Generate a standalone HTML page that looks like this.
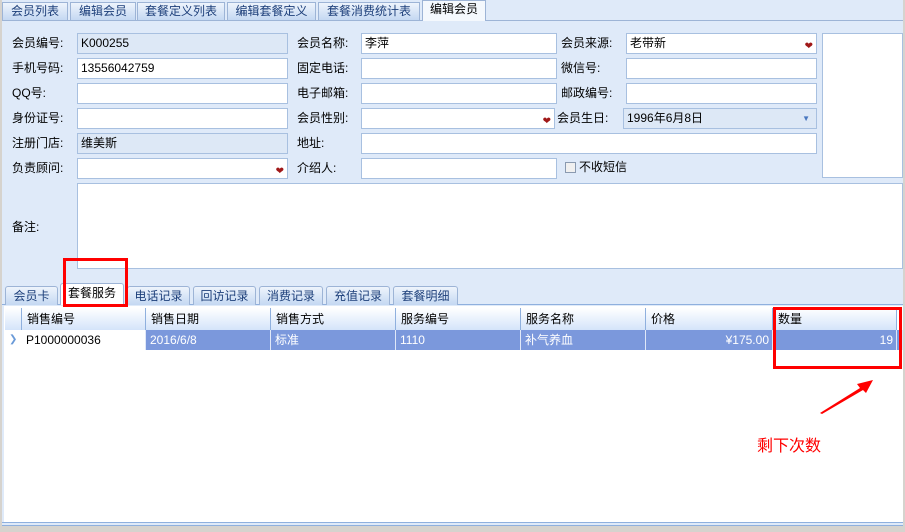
<!DOCTYPE html>
<html><head><meta charset="utf-8"><style>
*{margin:0;padding:0;box-sizing:border-box}
body{width:905px;height:532px;background:#d6d3ce;position:relative;overflow:hidden;font-family:"Liberation Sans","Noto Sans CJK SC","WenQuanYi Zen Hei",sans-serif;font-size:12px;color:#000}
.a{position:absolute}
.tab{position:absolute;top:2px;height:18px;background:linear-gradient(#eef4fc,#c4d8f2);border:1px solid #9db4d6;border-bottom:none;color:#1d3f7a;font-size:12px;line-height:16px;text-align:center}
.inp{position:absolute;height:21px;background:#fff;border:1px solid #a8c0e0;padding-left:3px;line-height:19px}
.ro{background:#dde8f6}
.lb{position:absolute;line-height:21px}
.heart{position:absolute;right:3px;top:3px;color:#a01818;font-size:10px}
.btab{position:absolute;top:286px;height:19px;background:linear-gradient(#eef4fc,#c4d8f2);border:1px solid #9db4d6;border-bottom:none;border-radius:3px 3px 0 0;color:#1d3f7a;line-height:18px;text-align:center}
.th{position:absolute;top:308px;height:22px;background:linear-gradient(#fff,#d4e4fa);border-right:1px solid #8fb0de;line-height:22px;padding-left:5px}
.td{position:absolute;top:330px;height:20px;background:#7b98dc;color:#fff;border-right:1px solid #e0e8f8;line-height:20px;padding-left:4px}
</style></head><body>
<div class="a" style="left:2px;top:0;width:901px;height:525px;background:#dfeaf9"></div>
<div class="a" style="left:2px;top:20px;width:901px;height:1px;background:#9db4d6"></div>
<div class="tab" style="left:2px;width:66px">会员列表</div>
<div class="tab" style="left:70px;width:66px">编辑会员</div>
<div class="tab" style="left:137px;width:88px">套餐定义列表</div>
<div class="tab" style="left:227px;width:89px">编辑套餐定义</div>
<div class="tab" style="left:318px;width:102px">套餐消费统计表</div>
<div class="tab" style="left:422px;width:64px;top:0;height:21px;background:#f4f8fd;color:#000">编辑会员</div>

<div class="lb" style="left:12px;top:33px">会员编号:</div><div class="inp ro" style="left:77px;top:33px;width:211px">K000255</div>
<div class="lb" style="left:297px;top:33px">会员名称:</div><div class="inp" style="left:361px;top:33px;width:196px">李萍</div>
<div class="lb" style="left:561px;top:33px">会员来源:</div><div class="inp" style="left:626px;top:33px;width:191px">老带新<span class="heart">❤</span></div>
<div class="inp" style="left:822px;top:33px;width:81px;height:145px"></div>

<div class="lb" style="left:12px;top:58px">手机号码:</div><div class="inp" style="left:77px;top:58px;width:211px">13556042759</div>
<div class="lb" style="left:297px;top:58px">固定电话:</div><div class="inp" style="left:361px;top:58px;width:196px"></div>
<div class="lb" style="left:561px;top:58px">微信号:</div><div class="inp" style="left:626px;top:58px;width:191px"></div>

<div class="lb" style="left:12px;top:83px">QQ号:</div><div class="inp" style="left:77px;top:83px;width:211px"></div>
<div class="lb" style="left:297px;top:83px">电子邮箱:</div><div class="inp" style="left:361px;top:83px;width:196px"></div>
<div class="lb" style="left:561px;top:83px">邮政编号:</div><div class="inp" style="left:626px;top:83px;width:191px"></div>

<div class="lb" style="left:12px;top:108px">身份证号:</div><div class="inp" style="left:77px;top:108px;width:211px"></div>
<div class="lb" style="left:297px;top:108px">会员性别:</div><div class="inp" style="left:361px;top:108px;width:194px"><span class="heart">❤</span></div>
<div class="lb" style="left:557px;top:108px">会员生日:</div><div class="inp ro" style="left:623px;top:108px;width:194px">1996年6月8日<span class="a" style="right:6px;top:0;color:#4a78c0;font-size:8px">▼</span></div>

<div class="lb" style="left:12px;top:133px">注册门店:</div><div class="inp ro" style="left:77px;top:133px;width:211px">维美斯</div>
<div class="lb" style="left:297px;top:133px">地址:</div><div class="inp" style="left:361px;top:133px;width:456px"></div>

<div class="lb" style="left:12px;top:158px">负责顾问:</div><div class="inp" style="left:77px;top:158px;width:211px"><span class="heart">❤</span></div>
<div class="lb" style="left:297px;top:158px">介绍人:</div><div class="inp" style="left:361px;top:158px;width:196px"></div>
<div class="a" style="left:565px;top:162px;width:11px;height:11px;border:1px solid #8a9ab0;background:#f0f0f0"></div>
<div class="lb" style="left:579px;top:157px">不收短信</div>

<div class="lb" style="left:12px;top:217px">备注:</div><div class="inp" style="left:77px;top:183px;width:826px;height:86px"></div>

<div class="a" style="left:2px;top:304px;width:901px;height:1px;background:#8fb0de"></div>
<div class="btab" style="left:5px;width:53px">会员卡</div>
<div class="btab" style="left:60px;width:64px;top:283px;height:22px;background:#fff;color:#000">套餐服务</div>
<div class="btab" style="left:127px;width:63px">电话记录</div>
<div class="btab" style="left:193px;width:63px">回访记录</div>
<div class="btab" style="left:259px;width:64px">消费记录</div>
<div class="btab" style="left:326px;width:64px">充值记录</div>
<div class="btab" style="left:393px;width:65px">套餐明细</div>

<div class="a" style="left:4px;top:306px;width:899px;height:217px;background:#fff"></div>
<div class="th" style="left:5px;width:17px"></div>
<div class="th" style="left:22px;width:124px">销售编号</div>
<div class="th" style="left:146px;width:125px">销售日期</div>
<div class="th" style="left:271px;width:125px">销售方式</div>
<div class="th" style="left:396px;width:125px">服务编号</div>
<div class="th" style="left:521px;width:125px">服务名称</div>
<div class="th" style="left:646px;width:127px">价格</div>
<div class="th" style="left:773px;width:124px">数量</div>
<div class="a" style="left:5px;top:330px;width:17px;height:20px;background:#fff;color:#6a9ad8;font-size:10px;line-height:20px;padding-left:4px">❯</div>
<div class="td" style="left:22px;width:124px;background:#fff;color:#000">P1000000036</div>
<div class="td" style="left:146px;width:125px">2016/6/8</div>
<div class="td" style="left:271px;width:125px">标准</div>
<div class="td" style="left:396px;width:125px">1110</div>
<div class="td" style="left:521px;width:125px">补气养血</div>
<div class="td" style="left:646px;width:127px;text-align:right;padding-right:3px">¥175.00</div>
<div class="td" style="left:773px;width:124px;text-align:right;padding-right:3px">19</div>
<div class="td" style="left:897px;width:6px;padding:0"></div>

<div class="a" style="left:63px;top:258px;width:65px;height:49px;border:3px solid #f00"></div>
<div class="a" style="left:773px;top:307px;width:129px;height:62px;border:3px solid #f00"></div>
<svg class="a" style="left:0;top:0" width="905" height="532"><polygon points="820,413 860,388 857,384 873,380 866,393 863,390 822,414" fill="#f00"/></svg>
<div class="a" style="left:757px;top:432px;color:#f00;font-size:16px">剩下次数</div>
<div class="a" style="left:2px;top:522px;width:901px;height:1px;background:#8fb0de"></div>
<div class="a" style="left:2px;top:525px;width:901px;height:1px;background:#8fb0de"></div>
</body></html>
